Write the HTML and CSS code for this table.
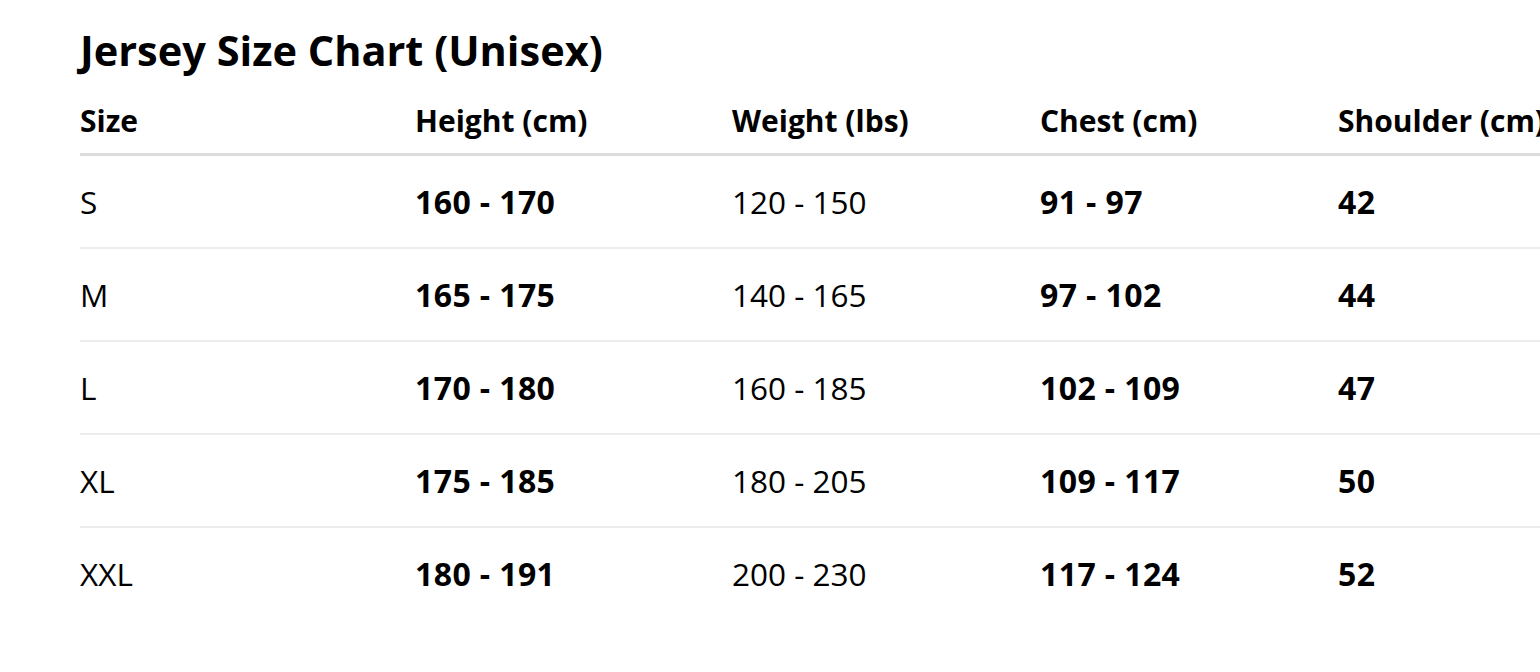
FILE: index.html
```html
<!DOCTYPE html>
<html lang="en">
<head>
<meta charset="utf-8">
<title>Jersey Size Chart</title>
<link rel="stylesheet" href="styles.css">
</head>
<body>
<main class="page">
  <h1 class="title">Jersey Size Chart (Unisex)</h1>
  <table class="chart">
    <colgroup>
      <col class="c1"><col class="c2"><col class="c3"><col class="c4"><col class="c5">
    </colgroup>
    <thead>
      <tr><th>Size</th><th>Height (cm)</th><th>Weight (lbs)</th><th>Chest (cm)</th><th>Shoulder (cm)</th></tr>
    </thead>
    <tbody>
      <tr><td>S</td><td class="b">160 - 170</td><td>120 - 150</td><td class="b">91 - 97</td><td class="b">42</td></tr>
      <tr><td>M</td><td class="b">165 - 175</td><td>140 - 165</td><td class="b">97 - 102</td><td class="b">44</td></tr>
      <tr><td>L</td><td class="b">170 - 180</td><td>160 - 185</td><td class="b">102 - 109</td><td class="b">47</td></tr>
      <tr><td>XL</td><td class="b">175 - 185</td><td>180 - 205</td><td class="b">109 - 117</td><td class="b">50</td></tr>
      <tr><td>XXL</td><td class="b">180 - 191</td><td>200 - 230</td><td class="b">117 - 124</td><td class="b">52</td></tr>
    </tbody>
  </table>
</main>
</body>
</html>
```

FILE: styles.css
```css
html, body {
  margin: 0;
  padding: 0;
  background: #fff;
  overflow: hidden;
}
body {
  font-family: "Open Sans", "Noto Sans", sans-serif;
  color: #000;
}
.page {
  padding: 22px 0 0 80px;
}
.title {
  margin: 0;
  font-size: 41.5px;
  font-weight: 700;
  line-height: 56px;
  letter-spacing: 0;
}
.chart {
  border-collapse: collapse;
  table-layout: fixed;
  width: 1600px;
  margin-top: 9px;
}
.c1 { width: 335px; }
.c2 { width: 317px; }
.c3 { width: 308px; }
.c4 { width: 298px; }
.c5 { width: 342px; }
.chart th {
  text-align: left;
  font-size: 30px;
  font-weight: 700;
  height: 66px;
  padding: 0;
  border-bottom: 3px solid #dcdcdc;
  white-space: nowrap;
}
.chart td {
  font-size: 31.5px;
  font-weight: 400;
  height: 91px;
  padding: 0;
  border-bottom: 2px solid #ededed;
  white-space: nowrap;
}
.chart tbody tr:last-child td {
  border-bottom: none;
}
.chart td.b {
  font-weight: 700;
  font-size: 32px;
  letter-spacing: 0.4px;
}
```
